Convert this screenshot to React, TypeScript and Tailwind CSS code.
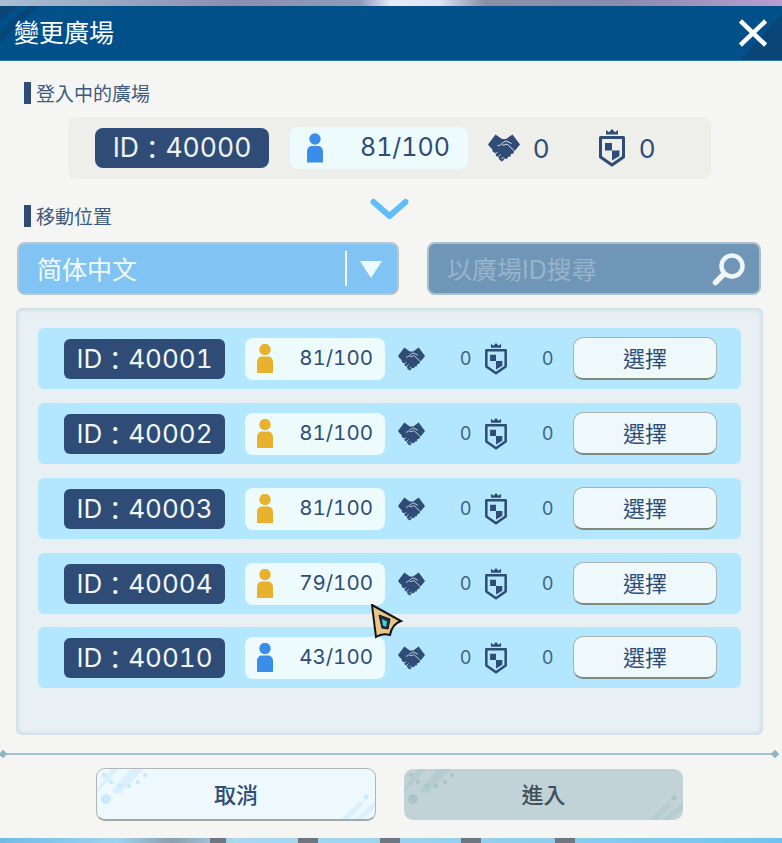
import React from "react";

const FONT = { fontFamily: 'Inter, "Noto Sans CJK TC", sans-serif' };

function Person({ color, w, h }: { color: string; w: number; h: number }) {
  return (
    <svg width={w} height={h} viewBox="0 0 16 29" fill={color}>
      <circle cx="8" cy="5.500" r="5.700" />
      <path d="M0 29V18c0-3.500 2.500-5.500 5-5.500h6c2.500 0 5 2 5 5.500v11z" />
    </svg>
  );
}

function Handshake({ w, h }: { w: number; h: number }) {
  return (
    <svg width={w} height={h} viewBox="0 0 32 28">
      <path
        fill="#2e4c76"
        d="M0 10.500 7.500.5l6.500 4.500h4L24.500.5 32 10.500l-4.500 5.500-1.500 1-.5 2.500-2.500.5-.5 2.500-2.500.5-1 2-2.500-.5-2 3-3-1.500-1-3-2.500-1-.5-3-2.500-1-1-3-2-2z"
      />
      <path
        fill="none"
        stroke="#f2f6f8"
        strokeWidth=".9"
        d="M9.500 11.500c2 1.500 5-4 9-4.500l5 2.500M14 11c2.500.5 4-1 5-1l7 6.500M9.500 18l-2 2M12.500 20.500l-2 2M15.500 23l-2 2"
      />
    </svg>
  );
}

function Shield({ w, h }: { w: number; h: number }) {
  return (
    <svg width={w} height={h} viewBox="0 0 26 38">
      <path fill="#2e4c76" d="M7 1l3 2.200L13 0l3 3.200L19 1v4.500H7z" />
      <path
        fill="none"
        stroke="#2e4c76"
        strokeWidth="3"
        strokeLinejoin="round"
        d="M1.500 8.500h23V28L13 36 1.500 28z"
      />
      <path fill="#2e4c76" d="M6 14h7v7.500H6zM13 21.500h7.500V27L13 31.500z" />
    </svg>
  );
}

function Deco({ dark }: { dark?: boolean }) {
  const c = dark ? "#b5ccd1" : "#daf0fd";
  const d = dark ? "#a9c5c9" : "#c9e9fc";
  return (
    <>
      <svg className="absolute left-0 top-0" width="60" height="40" viewBox="0 0 60 40">
        <path fill={c} d="M0 20 14 0h8L0 24z" />
        <path fill={c} d="M16 20 34 0h13L25 23c-3 3-11 1-9-3z" />
        <circle cx="7" cy="6" r="2.300" fill={d} />
        <circle cx="14" cy="13" r="2.200" fill={d} />
        <circle cx="23" cy="17" r="2.200" fill={d} />
        <circle cx="32" cy="17" r="2.200" fill={d} />
        <circle cx="41" cy="13" r="2.200" fill={d} />
        <circle cx="48" cy="6" r="2.200" fill={d} />
        <circle cx="9" cy="30" r="5" fill={d} />
      </svg>
      <svg className="absolute bottom-0 right-0" width="34" height="26" viewBox="0 0 34 26">
        <path fill={c} d="M0 26 18 9c3-1 5 1 3 4L8 26zM14 26 34 8v7L21 26z" />
        <circle cx="25" cy="4" r="2.500" fill={d} />
      </svg>
    </>
  );
}

function Id({ value }: { value: string }) {
  return (
    <>
      ID<span className="relative top-[2px]">：</span>
      {value}
    </>
  );
}

function Row({ id, count, blue, last }: { id: string; count: string; blue?: boolean; last?: boolean }) {
  return (
    <div
      className={
        last
          ? "-mt-[1px] flex h-[61px] items-center rounded-[6px] bg-[#b3e7ff] pl-[26px] text-[#2e4c76]"
          : "flex h-[61px] items-center rounded-[6px] bg-[#b3e7ff] pl-[26px] text-[#2e4c76]"
      }
    >
      <div className="flex h-[40px] w-[161px] items-center justify-center rounded-[6px] bg-[#2e4c76] text-[26px] font-normal tabular-nums text-[#f2f6f8]">
        <Id value={id} />
      </div>
      <div className="ml-[20px] flex h-[42px] w-[140px] items-center justify-between rounded-[8px] bg-[#eefbfc] pl-[12px] pr-[12px]">
        <Person color={blue ? "#3a8de8" : "#e8b22f"} w={16} h={29} />
        <span className="text-[20.5px] font-normal tabular-nums">{count}</span>
      </div>
      <div className="ml-[13px] flex">
        <Handshake w={27} h={24} />
      </div>
      <span className="ml-[35px] w-[10px] text-[18px] text-[#3f6286]">0</span>
      <div className="ml-[15px] flex">
        <Shield w={22} h={32} />
      </div>
      <span className="ml-[35px] w-[10px] text-[18px] text-[#3f6286]">0</span>
      <button className="ml-[21px] flex h-[43px] w-[144px] items-center justify-center rounded-[10px] border border-[#a9b2ad] border-b-2 border-b-[#7f8a7c] bg-[#eff9fb] pt-[2px] text-[22px] text-[#2e4c76]">
        選擇
      </button>
    </div>
  );
}

function Label({ children }: { children: string }) {
  return (
    <div className="flex h-[22px] items-center pl-[24px]">
      <span className="h-[22px] w-[7px] bg-[#2e4c76]" />
      <span className="ml-[5px] pt-[4px] text-[19px] leading-[22px] text-[#3d5a80]">{children}</span>
    </div>
  );
}

export default function App() {
  return (
    <div style={FONT} className="flex h-[843px] w-[782px] flex-col overflow-hidden">
      <div className="h-[6px] shrink-0 bg-[linear-gradient(90deg,#a9bdd3,#8a90ae_30%,#8f9bbb_46%,#e4ebfa_50%,#dfe6f7_56%,#8a90a8_62%,#8a8cae_80%,#b99dd2)]" />
      <div className="relative flex h-[55px] shrink-0 items-center justify-between overflow-hidden border-b border-b-[#2f7ea8] bg-[#01508a] pl-[14px] pr-[15px]">
        <svg className="absolute left-0 top-0" width="60" height="44" viewBox="0 0 60 44">
          <path fill="#0a4578" d="M0 0h18L0 16zM28 0h10L0 36V26z" />
        </svg>
        <svg className="absolute bottom-0 right-0" width="50" height="50" viewBox="0 0 50 50">
          <path fill="#0a4578" d="M50 4v46H8z" />
        </svg>
        <span className="relative text-[25px] leading-none text-white">變更廣場</span>
        <svg className="relative" width="28" height="28" viewBox="0 0 28 28">
          <path stroke="#fff" strokeWidth="4.500" strokeLinecap="square" d="M3 3.500l22 21M25 3.500l-22 21" />
        </svg>
      </div>

      <div className="relative flex flex-1 flex-col bg-[#f5f5f3]">
        <div className="mt-[21px]">
          <Label>登入中的廣場</Label>
        </div>
        <div className="mx-[68px] mt-[13px] flex h-[62px] w-[643px] items-center rounded-[8px] bg-[#eeeeea] pl-[27px] text-[#2e4c76]">
          <div className="flex h-[40px] w-[174px] items-center justify-center rounded-[8px] bg-[#2e4c76] text-[26.5px] font-normal tabular-nums text-[#eef3f7]">
            <Id value="40000" />
          </div>
          <div className="ml-[21px] flex h-[42px] w-[178px] items-center justify-between rounded-[8px] bg-[#eefbfc] pl-[17px] pr-[18px]">
            <Person color="#3a8de8" w={16} h={30} />
            <span className="text-[25px] font-normal tabular-nums">81/100</span>
          </div>
          <div className="ml-[20px] flex">
            <Handshake w={32} h={28} />
          </div>
          <span className="ml-[13px] w-[15px] text-[26px]">0</span>
          <div className="ml-[51px] flex">
            <Shield w={26} h={38} />
          </div>
          <span className="ml-[14px] text-[26px]">0</span>
        </div>
        <svg className="absolute left-[370px] top-[137px]" width="39" height="23" viewBox="0 0 39 23">
          <path fill="none" stroke="#5fbdf7" strokeWidth="6" strokeLinecap="round" strokeLinejoin="round" d="M3.500 4l16 14 16-14" />
        </svg>

        <div className="mt-[26px]">
          <Label>移動位置</Label>
        </div>
        <div className="mt-[15px] flex pl-[17px]">
          <div className="flex h-[53px] w-[382px] items-center rounded-[8px] border-2 border-[#b6c7cf] bg-[#81c3f3] pl-[18px] text-[25px] text-[#f4fbfd]">
            <span className="w-[308px] pt-[4px]">简体中文</span>
            <span className="h-[35px] w-[1.500px] bg-[#f4fbfd]" />
            <svg className="ml-[12px]" width="24" height="18" viewBox="0 0 24 18">
              <path fill="#eefbfc" d="M1 1h22L12 18z" />
            </svg>
          </div>
          <div className="ml-[28px] flex h-[53px] w-[334px] items-center justify-between rounded-[8px] border-2 border-[#aabfc9] bg-[#6f96b6] pl-[18px] pr-[13px] text-[25px] text-[#97b4cc]">
            <span className="pt-[4px]">以廣場ID搜尋</span>
            <svg width="34" height="34" viewBox="0 0 34 34" fill="none" stroke="#eef5f7">
              <circle cx="20" cy="14" r="10.500" strokeWidth="4.500" />
              <path d="M10.500 23.500 3.500 30.500" strokeWidth="5.500" strokeLinecap="round" />
            </svg>
          </div>
        </div>

        <div className="mx-[16px] mt-[13px] flex h-[427px] w-[747px] flex-col gap-[14px] rounded-[6px] bg-[#e9f0f3] px-[22px] pt-[20px] shadow-[inset_0_0_4px_2px_#c9dde6]">
          <Row id="40001" count="81/100" />
          <Row id="40002" count="81/100" />
          <Row id="40003" count="81/100" />
          <Row id="40004" count="79/100" />
          <Row id="40010" count="43/100" blue last />
        </div>

        <div className="relative ml-[3px] mt-[18px] h-[2px] w-[772px] bg-[#a3c3cf]">
          <span className="absolute -left-[3px] -top-[2px] h-[6px] w-[6px] rotate-45 bg-[#8fb5c4]" />
          <span className="absolute -right-[3px] -top-[2px] h-[6px] w-[6px] rotate-45 bg-[#8fb5c4]" />
        </div>

        <div className="mt-[13px] flex pl-[96px]">
          <button className="relative flex h-[53px] w-[280px] items-center justify-center overflow-hidden rounded-[9px] border border-[#b2b5b3] border-b-2 border-b-[#a3a8a6] bg-[#eef9fd] pt-[2px] text-[22px] font-medium text-[#2e4c76]">
            <Deco />
            <span className="relative">取消</span>
          </button>
          <button className="relative ml-[28px] mt-[1px] flex h-[51px] w-[279px] items-center justify-center overflow-hidden rounded-[9px] bg-[#c2d3d8] pt-[2px] text-[22px] font-medium text-[#414e58]">
            <Deco dark />
            <span className="relative">進入</span>
          </button>
        </div>

        <svg className="absolute left-[370px] top-[543px]" width="34" height="36" viewBox="0 0 34 36">
          <path fill="#e9c58a" stroke="#151515" strokeWidth="2" d="M2 1 31 17Q22 20 20 31 12 29 6 33z" />
          <path fill="#16304f" stroke="#151515" d="M9 11l11 4-2 10-6-1z" />
          <path fill="#3fd6d0" d="M12 15l5 2.500-1 5.500-3-1.500z" />
        </svg>
      </div>
      <div className="relative h-[5px] shrink-0 bg-[linear-gradient(90deg,#6fbde4,#9fd2ec_15%,#8a9fb0_22%,#a9d8f0_30%,#8fcdea_70%,#6fc4ec)]">
        <span className="absolute left-[210px] top-0 h-[5px] w-[16px] bg-[#6f7680]" />
        <span className="absolute left-[298px] top-0 h-[5px] w-[20px] bg-[#6f7680]" />
        <span className="absolute left-[380px] top-0 h-[5px] w-[20px] bg-[#6f7680]" />
        <span className="absolute left-[461px] top-0 h-[5px] w-[20px] bg-[#6f7680]" />
        <span className="absolute left-[555px] top-0 h-[5px] w-[20px] bg-[#6f7680]" />
      </div>
    </div>
  );
}
